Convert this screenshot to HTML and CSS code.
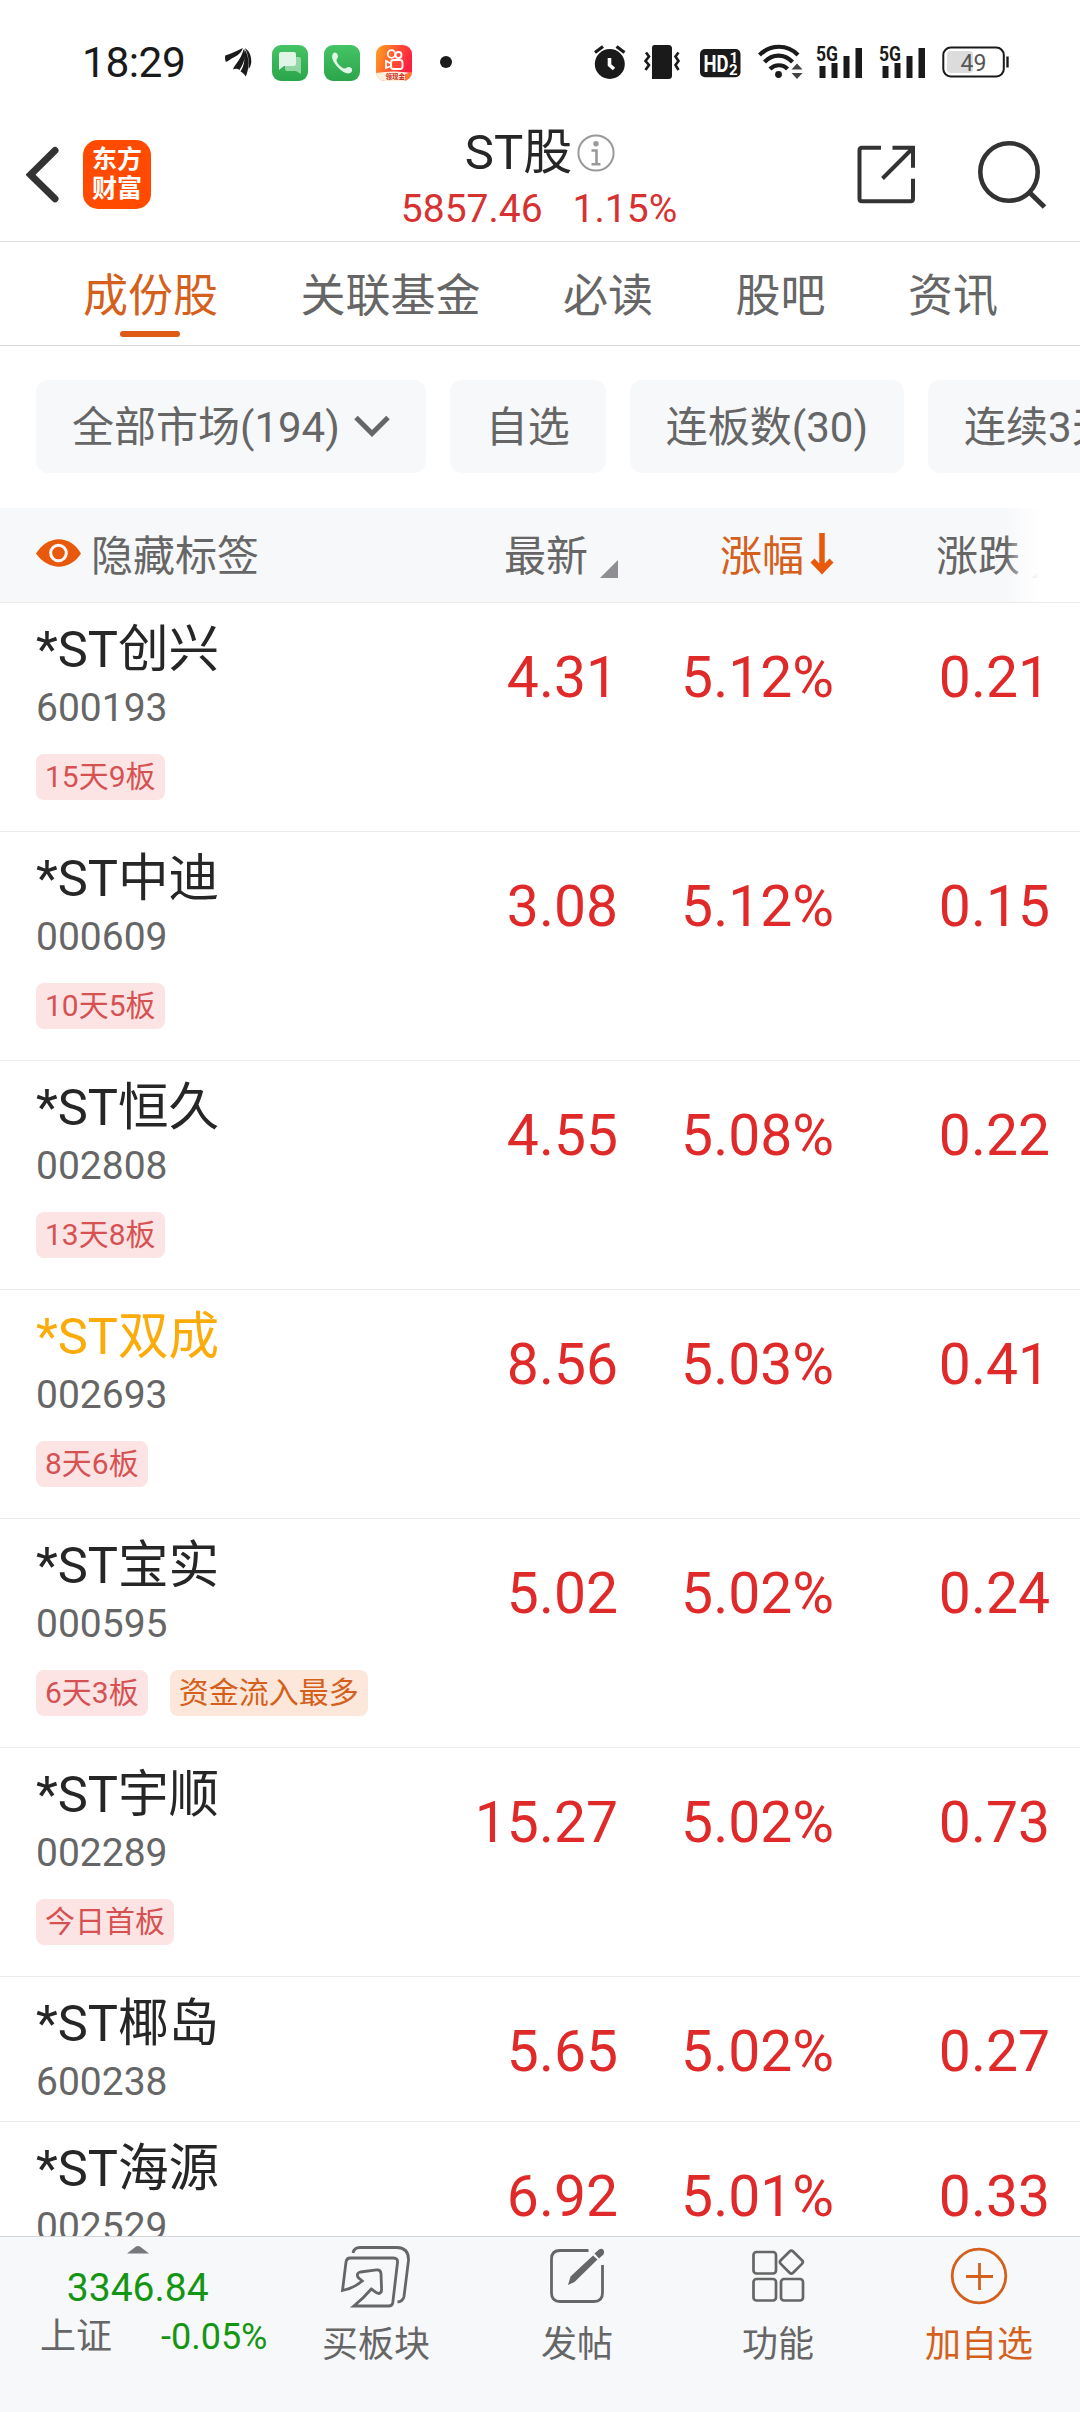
FILE: index.html
```html
<!DOCTYPE html>
<html lang="zh-CN">
<head>
<meta charset="utf-8">
<title>ST股</title>
<link rel="stylesheet" href="styles.css">
</head>
<body>
<div class="screen">
  <div class="status">
    <div class="status-left">
      <span class="time">18:29</span>
      <svg class="bird" width="27" height="32" viewBox="225 47 27 32"><path fill="#1a1a1a" d="M225.300 56.500c6-1.500 11-4.500 17.500-7.500c-2 7-9 9-12 11c-2 1.500-3 2.500-5 2.800q-1.200-2.800-.5-6.300zM233 70.500c2-6 8.500-10 10.500-20.500c3 8 0 15-4 21c-2-1.500-4-1.500-6.500-.5zM240.500 72.500c4.500-7 4.500-15 3.800-22.500c4.500 5.500 6 17 1.500 27.500c-1.500-2.500-3.500-4-5.300-5zM248.500 70c1-8-.5-16-3.800-21c5 2.500 7.500 10 6.300 16q-.5 3-2.500 5z"/></svg>
      <svg class="app" width="36" height="36" viewBox="0 0 36 36"><defs><linearGradient id="g" x2="0" y2="1"><stop stop-color="#45c465"/><stop offset="1" stop-color="#2ba54b"/></linearGradient></defs><rect width="36" height="36" rx="9" fill="url(#g)"/><path fill="#b9e6c4" fill-opacity=".7" d="M15 12h12q2 0 2 2v15l-5-3h-9q-2 0-2-2v-10q0-2 2-2z"/><path fill="#e0f5e5" d="M9 7h13q2 0 2 2v10q0 2-2 2h-10l-5 4v-16q0-2 2-2z"/></svg>
      <svg class="app" width="36" height="36" viewBox="0 0 36 36"><rect width="36" height="36" rx="9" fill="url(#g)"/><path fill="#e0f5e5" d="M9 8.500c2-2 4.500-.5 5 2.500c.3 2-1.500 2.500-1.500 4.500c.5 3 5 7.500 8 8c2 0 2.500-2 4.500-1.500c3 .5 4 3 2.500 5c-3 3-8 1-13-4c-5-5-8-11-5.500-14.500z"/></svg>
      <svg class="app" width="36" height="36" viewBox="0 0 36 36"><defs><linearGradient id="k" x2="1" y2=".35"><stop stop-color="#ffa51f"/><stop offset=".55" stop-color="#ff5632"/><stop offset="1" stop-color="#ff1f42"/></linearGradient><clipPath id="kc"><rect width="36" height="36" rx="9"/></clipPath></defs><g clip-path="url(#kc)"><path fill="url(#k)" d="M0 0h36v36h-36z"/><path fill="#fff0dc" d="M0 28q18-3 36 0v8h-36z"/><path fill="#ff7a30" d="M29 29l7-2v9h-7z"/></g><g fill="none" stroke="#fff" stroke-width="1.800"><circle cx="15.500" cy="9" r="3.800"/><circle cx="22.500" cy="10" r="3"/><rect x="15" y="15" width="11.500" height="9" rx="2.500"/><path d="M15 18.500l-5-2.500v7l5-2z"/></g><text class="promo" x="9.500" y="34">领现金</text></svg>
      <span class="dot"></span>
    </div>
    <div class="status-right">
      <svg width="32" height="36" viewBox="595.500 44 32 36"><circle cx="611.300" cy="64" r="15" fill="#1a1a1a"/><path fill="none" stroke="#1a1a1a" stroke-width="3.200" d="M596.500 52.500l8-6M626 52.500l-8-6"/><path fill="none" stroke="#fff" stroke-width="3.600" d="M611 58v7l4.500 4"/></svg>
      <svg class="vib" width="37" height="36" viewBox="645.500 44 37 36"><path fill="#1a1a1a" d="M656 45h14q3.500 0 3.500 3.500v27q0 3.500-3.500 3.500h-16.500v-31q0-3 2.500-3z"/><path fill="none" stroke="#1a1a1a" stroke-width="2.600" d="M647.500 52.500l3 4-3.500 4.500 3.500 4-3.500 5M680 52.500l-3 4 3 4.500-3 4 3 5"/></svg>
      <svg class="hd" width="41" height="37" viewBox="702 45 41 37"><rect x="702" y="49" width="40.500" height="28.300" rx="5" fill="#1a1a1a"/><text class="hdt" x="705.500" y="71.500" textLength="25" lengthAdjust="spacingAndGlyphs">HD</text><text class="hdn" x="731.500" y="62.500">1</text><text class="hdn" x="731" y="74.500">2</text></svg>
      <svg class="wifi" width="45" height="36" viewBox="760 44 45 36"><g fill="none" stroke="#1a1a1a" stroke-width="4.200"><path d="M761.500 55c11-11 28-11 38.500 0M766.500 62c8-8.500 20-8.500 28 0M772 69c5-5 13-5 17.500 0"/></g><circle cx="780.500" cy="74.500" r="3.400" fill="#1a1a1a"/><path fill="#444" d="M793.500 69.500h11l-5.500-6zM793.500 73h11l-5.500 6z"/></svg>
      <svg class="sig" width="47" height="48" viewBox="818 37 47 48"><text class="fiveg" x="818" y="60" textLength="22" lengthAdjust="spacingAndGlyphs">5G</text><path fill="#1a1a1a" d="M821.500 65h6v12h-6zM833.500 62h6v15h-6zM845.500 55h6v22h-6zM857.500 47h6.500v30h-6.500z"/></svg>
      <svg class="sig" width="47" height="48" viewBox="818 37 47 48"><text class="fiveg" x="818" y="60" textLength="22" lengthAdjust="spacingAndGlyphs">5G</text><path fill="#1a1a1a" d="M821.500 65h6v12h-6zM833.500 62h6v15h-6zM845.500 55h6v22h-6zM857.500 47h6.500v30h-6.500z"/></svg>
      <svg class="bat" width="68" height="32" viewBox="943 46.500 68 32"><rect x="948" y="51.500" width="26" height="22" rx="4" fill="#dcdcdc"/><rect x="944.300" y="48" width="60.500" height="29" rx="7.500" fill="none" stroke="#1a1a1a" stroke-width="2"/><path stroke="#1a1a1a" stroke-width="2.400" d="M1008.500 57v11"/><text class="batn" x="961.500" y="71">49</text></svg>
    </div>
  </div>

  <header class="head">
    <div class="head-left">
      <svg width="34" height="60" viewBox="26 144 34 60"><path fill="none" stroke="#333" stroke-width="7" stroke-linecap="round" d="M55 150.500l-24.500 24.200 24.500 24"/></svg>
      <div class="logo"><span>东方</span><span>财富</span></div>
    </div>
    <div class="head-mid">
      <div class="title">ST股<svg width="38" height="38" viewBox="0 0 38 38"><circle cx="19" cy="19" r="17.600" fill="none" stroke="#999" stroke-width="2"/><circle cx="19" cy="9.800" r="2.700" fill="#999"/><path fill="none" stroke="#999" stroke-width="2.600" d="M14.500 16.500h5v14M14.500 30.200h9"/></svg></div>
      <div class="quote"><span>5857.46</span><span>1.15%</span></div>
    </div>
    <div class="head-right">
      <svg width="60" height="60" viewBox="857 145 60 60"><path fill="none" stroke="#333" stroke-width="4" d="M881 147.700h-19q-2.500 0-2.500 2.500v48.500q0 2.500 2.500 2.500h48.500q2.500 0 2.500-2.500v-20M892.500 147.700h20.500v20M912.500 148.500l-30 30"/></svg>
      <svg width="70" height="70" viewBox="977 139 70 70"><circle cx="1009" cy="171" r="28.700" fill="none" stroke="#333" stroke-width="4.600"/><path stroke="#333" stroke-width="5" d="M1029 191l15.500 15"/></svg>
    </div>
  </header>

  <nav class="tabs"><span class="tab on">成份股</span><span class="tab">关联基金</span><span class="tab">必读</span><span class="tab">股吧</span><span class="tab">资讯</span></nav>

  <div class="chips">
    <span class="chip">全部市场(194)<svg width="36" height="22" viewBox="0 0 36 22"><path fill="none" stroke="#666" stroke-width="5" d="M2 2.500l16 16 16-16"/></svg></span>
    <span class="chip">自选</span><span class="chip">连板数(30)</span><span class="chip">连续3天上涨</span>
  </div>

  <div class="thead">
    <div class="c-name"><svg width="46" height="30" viewBox="0 0 46 30"><path fill="#e8590c" d="M0 15.500C12-3.500 34-3.500 45 15.500C34 33 12 33 0 15.500z"/><circle cx="22.500" cy="15" r="7.800" fill="#e8590c" stroke="#f7f8fa" stroke-width="3"/></svg><span>隐藏标签</span></div>
    <div class="c-last">最新<svg width="18" height="18" viewBox="0 0 18 18"><path fill="#8e8e93" d="M18 0v18h-18z"/></svg></div>
    <div class="c-pct on">涨幅<svg width="24" height="42" viewBox="0 0 24 42"><path fill="none" stroke="#e8590c" stroke-width="5.500" d="M12 0v36M2.500 27.500l9.500 10 9.500-10"/></svg></div>
    <div class="c-chg">涨跌<svg width="18" height="18" viewBox="0 0 18 18"><path fill="#8e8e93" d="M18 0v18h-18z"/></svg></div>
    <div class="fade"></div>
  </div>

  <main class="list">
    <div class="row"><div class="c-name"><div class="name">*ST创兴</div><div class="code">600193</div><div class="tags"><span class="tag">15天9板</span></div></div><div class="num c-last">4.31</div><div class="num c-pct">5.12%</div><div class="num c-chg">0.21</div></div>
    <div class="row"><div class="c-name"><div class="name">*ST中迪</div><div class="code">000609</div><div class="tags"><span class="tag">10天5板</span></div></div><div class="num c-last">3.08</div><div class="num c-pct">5.12%</div><div class="num c-chg">0.15</div></div>
    <div class="row"><div class="c-name"><div class="name">*ST恒久</div><div class="code">002808</div><div class="tags"><span class="tag">13天8板</span></div></div><div class="num c-last">4.55</div><div class="num c-pct">5.08%</div><div class="num c-chg">0.22</div></div>
    <div class="row"><div class="c-name"><div class="name own">*ST双成</div><div class="code">002693</div><div class="tags"><span class="tag">8天6板</span></div></div><div class="num c-last">8.56</div><div class="num c-pct">5.03%</div><div class="num c-chg">0.41</div></div>
    <div class="row"><div class="c-name"><div class="name">*ST宝实</div><div class="code">000595</div><div class="tags"><span class="tag">6天3板</span><span class="tag flow">资金流入最多</span></div></div><div class="num c-last">5.02</div><div class="num c-pct">5.02%</div><div class="num c-chg">0.24</div></div>
    <div class="row"><div class="c-name"><div class="name">*ST宇顺</div><div class="code">002289</div><div class="tags"><span class="tag">今日首板</span></div></div><div class="num c-last">15.27</div><div class="num c-pct">5.02%</div><div class="num c-chg">0.73</div></div>
    <div class="row short"><div class="c-name"><div class="name">*ST椰岛</div><div class="code">600238</div></div><div class="num c-last">5.65</div><div class="num c-pct">5.02%</div><div class="num c-chg">0.27</div></div>
    <div class="row short"><div class="c-name"><div class="name">*ST海源</div><div class="code">002529</div></div><div class="num c-last">6.92</div><div class="num c-pct">5.01%</div><div class="num c-chg">0.33</div></div>
  </main>

  <footer class="bar">
    <div class="index">
      <svg width="22" height="8" viewBox="0 0 22 8"><path fill="#77777c" d="M0 7.500l9-7q2-1 4 0l9 7z"/></svg>
      <div class="ival">3346.84</div>
      <div class="iline"><span>上证</span><span class="down">-0.05%</span></div>
    </div>
    <div class="act"><svg width="72" height="64" viewBox="340 2244 72 64"><g fill="none" stroke="#666" stroke-width="2.800" stroke-linejoin="miter"><path d="M342.500 2290.500l3.500-28.500q.6-4 4-4h43.500q4.500 0 4 4.500l-4.700 40q-.5 3.500-4 3.500h-35c7-5.500 12-10.500 17.500-17c3 2 5 4.500 7.500 4.500q2.800-.5 2.800-4l-.6-16q-.3-4-4.500-3.700l-16 2.200c-4 .8-4 4.500-1.200 6.500l3 2.500c-6 5-12 8-19.800 9.500z"/><path d="M353 2253q1-5.500 7-5.500h37q12 .5 11.500 13l-4.500 36q-1 5-6.500 5.500"/></g></svg><span>买板块</span></div>
    <div class="act"><svg width="56" height="64" viewBox="549 2244 56 64"><path fill="none" stroke="#666" stroke-width="2.800" d="M588.500 2250.500h-28.500q-8.500 0-8.500 8.500v34q0 8.500 8.500 8.500h34q8.500 0 8.500-8.500v-28"/><path fill="#666" d="M568 2285l2.500-8.500 22.500-21 4.500 4-23 22.500zM594.500 2253.500l4.500-4q3-1.500 4.500.5t0 4.500l-4.500 4z"/></svg><span>发帖</span></div>
    <div class="act"><svg width="54" height="64" viewBox="751 2244 54 64"><g fill="none" stroke="#666" stroke-width="2.700"><rect x="753.500" y="2252" width="22.500" height="21.500" rx="3"/><rect x="753.500" y="2279" width="22.500" height="21.500" rx="3"/><rect x="781" y="2279" width="22" height="21.500" rx="3"/><rect x="782.500" y="2253.500" width="17.500" height="17.500" rx="2.500" transform="rotate(45 791.500 2262.300)"/></g></svg><span>功能</span></div>
    <div class="act on"><svg width="58" height="64" viewBox="950 2244 58 64"><circle cx="979" cy="2276" r="26.800" fill="none" stroke="#d4601c" stroke-width="2.800"/><path stroke="#d4601c" stroke-width="2.800" d="M966 2276.500h27M979.500 2263v27"/></svg><span>加自选</span></div>
  </footer>
</div>
</body>
</html>
```
FILE: styles.css
```css
* { box-sizing: border-box; }
body { margin: 0; background: #fff; }
svg { display: block; flex: none; }
.screen {
  width: 1080px; height: 2412px; overflow: hidden;
  display: flex; flex-direction: column;
  font-family: Roboto, "Noto Sans CJK SC", sans-serif;
  color: #666; background: #fff; white-space: nowrap;
}

/* status bar */
.status { flex: none; height: 124px; display: flex; justify-content: space-between; padding: 0 70px 0 82px; }
.status-left, .status-right { display: flex; align-items: center; }
.time { font-size: 42.5px; line-height: 50px; color: #1a1a1a; width: 143px; letter-spacing: -0.5px; margin-top: 1px; }
.app { margin: 1px 16px 0 0; }
.bird { margin-right: 20px; }
.dot { width: 12px; height: 12px; border-radius: 50%; background: #1a1a1a; margin-left: 12px; }
.vib { margin-left: 18px; }
.hd { margin-left: 19px; margin-top: 2px; }
.wifi { margin-left: 17px; }
.sig { margin-left: 13px; }
.sig + .sig { margin-left: 16px; }
.bat { margin-left: 16px; }
.hdt { font-size: 23px; font-weight: 700; fill: #fff; }
.hdn { font-size: 15px; font-weight: 700; fill: #fff; }
.fiveg { font-size: 21px; font-weight: 700; fill: #1a1a1a; }
.batn { font-size: 23px; fill: #555; }
.promo { font-size: 6.5px; font-weight: 700; fill: #c92a1a; }

/* title bar */
.head { flex: none; height: 118px; border-bottom: 1px solid #dcdcdc; display: grid; grid-template-columns: 1fr auto 1fr; }
.head-left { display: flex; align-items: center; padding: 0 0 17px 26px; gap: 23px; }
.logo {
  width: 68px; height: 69px; border-radius: 15px; background: #ff4a00; color: #fff;
  display: flex; flex-direction: column; align-items: center; justify-content: center;
  font-size: 25px; font-weight: 700; line-height: 29px;
}
.head-mid { display: flex; flex-direction: column; align-items: center; }
.title { display: flex; align-items: center; gap: 5px; font-size: 49px; line-height: 58px; color: #262626; }
.quote { display: flex; gap: 30px; font-size: 39px; line-height: 46px; color: #d63232; margin: 4px 2px 0 0; }
.head-right { display: flex; align-items: center; justify-content: flex-end; gap: 60px; padding: 0 33px 16px 0; }

/* tabs */
.tabs { flex: none; height: 104px; border-bottom: 1px solid #d8d8d8; display: flex; justify-content: space-between; padding: 0 82px 0 83px; font-size: 45px; line-height: 110px; }
.tab { position: relative; }
.tab.on, .on { color: #d4601c; }
.tab.on::after { content: ""; position: absolute; left: 37px; top: 89px; width: 60px; height: 6px; border-radius: 3px; background: #dd5b14; }

/* filters */
.chips { flex: none; height: 162px; padding: 34px 0 0 36px; display: flex; gap: 24px; overflow: hidden; }
.chip { flex: none; height: 93px; padding: 0 36px; border-radius: 12px; background: #f7f8fa; display: flex; align-items: center; font-size: 42px; line-height: 90px; padding-top: 3px; }
.chip svg { margin-left: 14px; margin-top: -5px; }

/* table */
.thead { flex: none; height: 95px; position: relative; background: #f7f8fa; border-bottom: 1px solid #ececec; display: flex; align-items: center; font-size: 42px; line-height: 94px; padding-top: 4px; }
.thead > div { display: flex; align-items: center; height: 94px; }
.thead .c-name { gap: 9px; }
.thead .c-name svg { margin-top: -8px; }
.thead .c-last, .thead .c-pct, .thead .c-chg { justify-content: flex-end; }
.thead .c-last svg, .thead .c-chg svg { margin: 23px 0 0 12px; }
.thead .c-pct svg { margin: -6px 0 0 6px; }
.thead .fade { position: absolute; right: 0; top: 0; width: 75px; background: linear-gradient(90deg, rgba(255,255,255,0), #fff 34px); }
.c-name { width: 400px; padding-left: 36px; }
.c-last { width: 218px; text-align: right; }
.c-pct { width: 216px; text-align: right; }
.c-chg { width: 216px; text-align: right; }

.list { height: 1633px; overflow: hidden; flex: none; }
.row { height: 229px; border-bottom: 1px solid #ebebeb; display: flex; padding-top: 16px; }
.row.short { height: 145px; }
.name { font-size: 50.6px; line-height: 61px; color: #262626; }
.name.own { color: #fbab0a; }
.code { font-size: 39px; line-height: 46px; margin-top: 5px; }
.tags { display: flex; gap: 22px; margin-top: 23px; }
.tag { height: 46px; line-height: 46px; padding: 0 9px; border-radius: 8px; font-size: 30px; background: #fce4e4; color: #d65252; }
.tag.flow { background: #fde7da; color: #d4601c; }
.num { font-size: 57px; line-height: 66px; padding-top: 26px; color: #e02a2a; }

/* bottom bar */
.bar { flex: none; height: 176px; border-top: 1px solid #d3d4d8; background: #f7f8fa; display: flex; }
.index { width: 275.5px; display: flex; flex-direction: column; align-items: center; padding-top: 9px; }
.ival { font-size: 39px; line-height: 46px; margin-top: 11px; color: #149614; }
.iline { display: flex; justify-content: space-between; width: 100%; padding: 0 8px 0 40px; font-size: 36px; line-height: 42px; margin-top: 5px; }
.iline .down { color: #149614; }
.act { width: 201px; display: flex; flex-direction: column; align-items: center; padding-top: 7px; font-size: 36px; line-height: 42px; }
.act span { margin-top: 16px; }
```
